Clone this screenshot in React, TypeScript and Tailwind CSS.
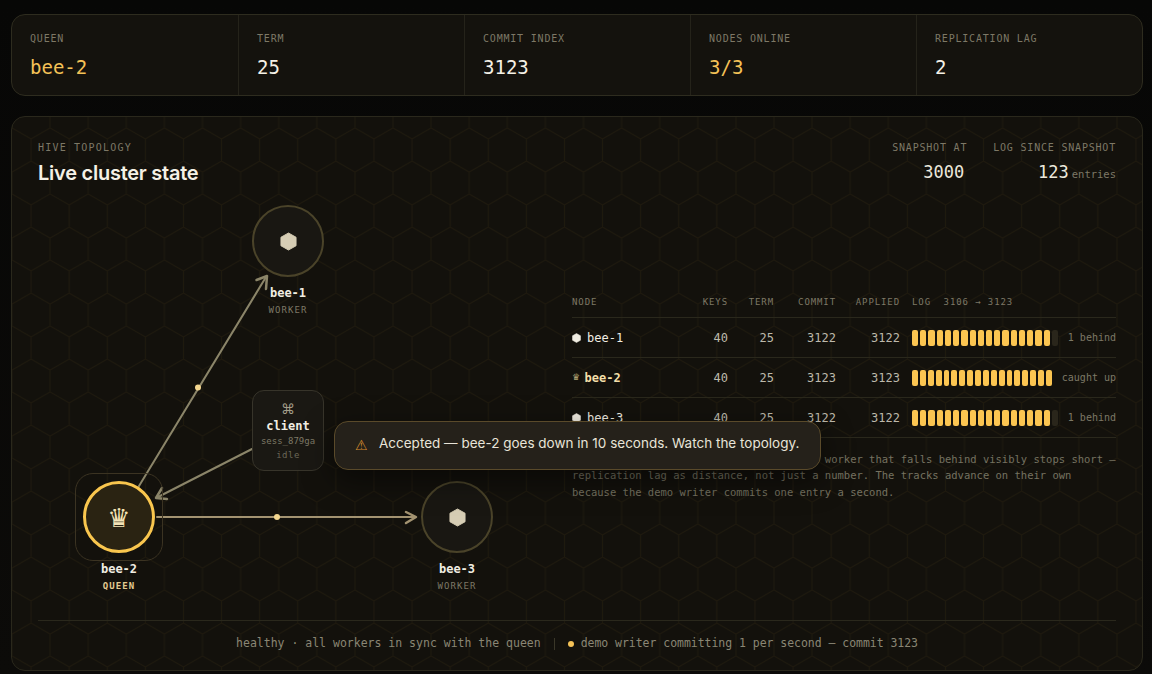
import React from "react";

const stats = [
  { label: "QUEEN", value: "bee-2", amber: true },
  { label: "TERM", value: "25", amber: false },
  { label: "COMMIT INDEX", value: "3123", amber: false },
  { label: "NODES ONLINE", value: "3/3", amber: true },
  { label: "REPLICATION LAG", value: "2", amber: false },
];

const rows = [
  { name: "bee-1", queen: false, keys: 40, term: 25, commit: 3122, applied: 3122, filled: 17, note: "1 behind" },
  { name: "bee-2", queen: true, keys: 40, term: 25, commit: 3123, applied: 3123, filled: 18, note: "caught up" },
  { name: "bee-3", queen: false, keys: 40, term: 25, commit: 3122, applied: 3122, filled: 17, note: "1 behind" },
];

function Hex({ className }: { className: string }) {
  return (
    <svg viewBox="0 0 18 20" className={className} fill="currentColor" stroke="currentColor" strokeWidth="1" strokeLinejoin="round">
      <polygon points="9,1 17,5.5 17,14.5 9,19 1,14.5 1,5.5" />
    </svg>
  );
}

function Worker({ name, left, top }: { name: string; left: string; top: string }) {
  return (
    <div className={`absolute flex w-[72px] flex-col items-center ${left} ${top}`}>
      <div className="flex h-[72px] w-[72px] items-center justify-center rounded-full border-2 border-[#4a4329] bg-[#191712]">
        <Hex className="h-[19px] w-[17px] text-[#d6cdb4]" />
      </div>
      <div className="mt-2 whitespace-nowrap text-[12px] leading-4 font-bold text-[#f1ede2]">{name}</div>
      <div className="mt-[3px] text-[9px] leading-3 tracking-[1.08px] text-[#7d7866]">WORKER</div>
    </div>
  );
}

export default function App() {
  return (
    <div className="flex h-[674px] w-[1152px] flex-col gap-5 overflow-hidden bg-gradient-to-b from-[#070706] to-[#0c0b09] pt-[14px] pr-[9px] pl-[11px] font-['DejaVu_Sans_Mono',monospace]">
      {/* stat bar */}
      <div className="grid h-[82px] shrink-0 grid-cols-5 rounded-[14px] border border-[#2e2c1f] bg-[#14120d]">
        {stats.map((s, i) => (
          <div key={s.label} className={`flex flex-col pt-[18px] pl-[18px] ${i > 0 ? "border-l border-[#25231a]" : ""}`}>
            <div className="text-[10px] leading-3 tracking-[0.8px] text-[#7d7866]">{s.label}</div>
            <div className={`mt-[10px] text-[19px] leading-6 ${s.amber ? "text-[#f4c257]" : "text-[#f5f1e6]"}`}>{s.value}</div>
          </div>
        ))}
      </div>

      {/* main panel */}
      <div className="relative flex h-[555px] shrink-0 flex-col overflow-hidden rounded-[14px] border border-[#2a281c] bg-[#13110c] px-[26px]">
        <svg className="absolute inset-0 h-full w-full" aria-hidden="true">
          <defs>
            <pattern id="hive" width="38.1" height="66" patternUnits="userSpaceOnUse" patternTransform="translate(0 11)">
              <path
                d="M0 0L19.05 11L38.1 0M19.05 11V33M0 44L19.05 33L38.1 44M0 44V66M38.1 44V66"
                fill="none"
                stroke="#f5b93f"
                strokeOpacity="0.055"
                strokeWidth="1"
              />
            </pattern>
          </defs>
          <rect width="100%" height="100%" fill="url(#hive)" />
        </svg>

        {/* header */}
        <div className="relative flex h-[78px] shrink-0 items-start justify-between pt-[25px]">
          <div>
            <div className="text-[10px] leading-3 tracking-[1.2px] text-[#7d7866]">HIVE TOPOLOGY</div>
            <div className="mt-[5px] font-['Inter',sans-serif] text-[20px] leading-7 font-semibold tracking-[-0.25px] text-[#f5f1e6]">Live cluster state</div>
          </div>
          <div className="flex gap-[26px]">
            <div className="text-right">
              <div className="text-[10px] leading-3 tracking-[0.8px] text-[#7d7866]">SNAPSHOT AT</div>
              <div className="mt-[6px] pr-[3px] text-[17px] leading-6 text-[#ece8dc]">3000</div>
            </div>
            <div className="text-right">
              <div className="text-[10px] leading-3 tracking-[0.8px] text-[#7d7866]">LOG SINCE SNAPSHOT</div>
              <div className="mt-[6px] text-[17px] leading-6 text-[#ece8dc]">
                123<span className="ml-[3px] text-[10.5px] text-[#7d7866]">entries</span>
              </div>
            </div>
          </div>
        </div>

        {/* body */}
        <div className="relative flex h-[425px] shrink-0">
          {/* topology canvas */}
          <div className="relative h-[425px] w-[534px] shrink-0">
            <svg className="absolute top-0 left-0 h-[425px] w-[534px]" viewBox="38 195 534 425" fill="none" aria-hidden="true">
              <g stroke="#8b8569" strokeWidth="2" strokeLinecap="round" strokeLinejoin="round">
                <path d="M139 486L266 277" />
                <path d="M256.5 280L267 276L266 289" strokeWidth="2.5" />
                <path d="M252 449L158 497" />
                <path d="M162 488L156 498L167 499" strokeWidth="2.5" />
              </g>
              <g stroke="#a39371" strokeWidth="2" strokeLinecap="round" strokeLinejoin="round">
                <path d="M157 517H415" />
                <path d="M406 512L416 517L406 523" strokeWidth="2.5" />
              </g>
              <circle cx="198" cy="387.5" r="3" fill="#f3d68f" />
              <circle cx="277" cy="517" r="3" fill="#f3d68f" />
            </svg>

            <Worker name="bee-1" left="left-[214px]" top="top-[10px]" />
            <Worker name="bee-3" left="left-[383px]" top="top-[286px]" />

            {/* queen */}
            <div className="absolute top-[278px] left-[37px] h-[88px] w-[88px] rounded-[18px] border border-[#3b3322]" />
            <div className="absolute top-[286px] left-[45px] flex w-[72px] flex-col items-center">
              <div className="flex h-[72px] w-[72px] items-center justify-center rounded-full border-[3px] border-[#f9c64e] bg-[#2a2312] pt-[2px]">
                <span className="font-['DejaVu_Sans',sans-serif] text-[26px] leading-none text-[#f3e3b6]">♛</span>
              </div>
              <div className="mt-2 text-[12px] leading-4 font-bold text-[#f1ede2]">bee-2</div>
              <div className="mt-[3px] text-[9px] leading-3 font-bold tracking-[1.08px] text-[#e3cb92]">QUEEN</div>
            </div>

            {/* client */}
            <div className="absolute top-[195px] left-[214px] flex h-[81px] w-[72px] flex-col items-center rounded-[12px] border border-[#37342a] bg-[#1a1813] pt-[9px]">
              <div className="font-['DejaVu_Sans',sans-serif] text-[14px] leading-[18px] text-[#a39e8a]">⌘</div>
              <div className="text-[12px] leading-4 font-bold text-[#f1ede2]">client</div>
              <div className="mt-[1px] text-[9px] leading-3 text-[#7d7866]">sess_879ga</div>
              <div className="mt-[2px] text-[9px] leading-3 tracking-[0.5px] text-[#6b6757]">idle</div>
            </div>
          </div>

          {/* table + note */}
          <div className="flex min-w-0 flex-1 flex-col pt-[101px]">
            <div className="flex h-[22px] items-start border-b border-[#2a281c] text-[9px] leading-3 tracking-[0.9px] text-[#7d7866]">
              <div className="w-[126px]">NODE</div>
              <div className="w-[30px] text-right">KEYS</div>
              <div className="w-[46px] text-right">TERM</div>
              <div className="w-[62px] text-right">COMMIT</div>
              <div className="w-[64px] text-right">APPLIED</div>
              <div className="ml-[12px] whitespace-pre">LOG  3106 → 3123</div>
            </div>
            {rows.map((r) => (
              <div key={r.name} className="flex h-[40px] items-center border-b border-[#2a281c] text-[12px] text-[#bdb9ab]">
                <div className="flex w-[126px] items-center">
                  {r.queen ? (
                    <>
                      <span className="w-[12.5px] font-['DejaVu_Sans',sans-serif] text-[9px] text-[#b5a878]">♛</span>
                      <span className="font-bold text-[#f3dfa8]">{r.name}</span>
                    </>
                  ) : (
                    <>
                      <Hex className="mr-[6px] h-[10px] w-[9px] text-[#f1ede2]" />
                      <span className="text-[#f1ede2]">{r.name}</span>
                    </>
                  )}
                </div>
                <div className="w-[30px] text-right">{r.keys}</div>
                <div className="w-[46px] text-right">{r.term}</div>
                <div className="w-[62px] text-right">{r.commit}</div>
                <div className="w-[64px] text-right">{r.applied}</div>
                <div className="ml-[12px] flex min-w-0 flex-1 items-center gap-[10px]">
                  <div className="flex min-w-0 flex-1 gap-[2px]">
                    {Array.from({ length: 18 }).map((_, i) => (
                      <div key={i} className={`h-4 flex-1 rounded-[2px] ${i < r.filled ? "bg-[#fbc551]" : "bg-[#2a261b]"}`} />
                    ))}
                  </div>
                  <div className="text-[10px] whitespace-nowrap text-[#7d7866]">{r.note}</div>
                </div>
              </div>
            ))}
            <p className="mt-[13px] text-[10.5px] leading-[16.4px] whitespace-nowrap text-[#757160]">
              Each node's track is its log segment: a worker that falls behind visibly stops short —
              <br />
              replication lag as distance, not just a number. The tracks advance on their own
              <br />
              because the demo writer commits one entry a second.
            </p>
          </div>
        </div>

        {/* footer */}
        <div className="relative flex h-[50px] shrink-0 items-center justify-center border-t border-[#2a281c] pb-[3px] text-[11.5px] text-[#8a8674]">
          <span>healthy · all workers in sync with the queen</span>
          <span className="mx-[13px] h-[12px] w-px bg-[#3a3728]" />
          <span className="mr-[7px] h-[6px] w-[6px] rounded-full bg-[#f4c257]" />
          <span className="tracking-[-0.04px]">demo writer committing 1 per second — commit 3123</span>
        </div>

        {/* toast */}
        <div className="absolute top-[304px] left-[322px] flex h-[49px] w-[487px] items-center rounded-[14px] border border-[#5a4a2a] bg-[#25211a] pl-[20px] shadow-[0_10px_30px_rgba(0,0,0,0.5)]">
          <span className="w-[24px] font-['DejaVu_Sans',sans-serif] text-[14px] text-[#d98f2e]">⚠</span>
          <span className="mb-[5px] font-['Inter',sans-serif] text-[13.5px] text-[#e8e4d8]">Accepted — bee-2 goes down in 10 seconds. Watch the topology.</span>
        </div>
      </div>
    </div>
  );
}
